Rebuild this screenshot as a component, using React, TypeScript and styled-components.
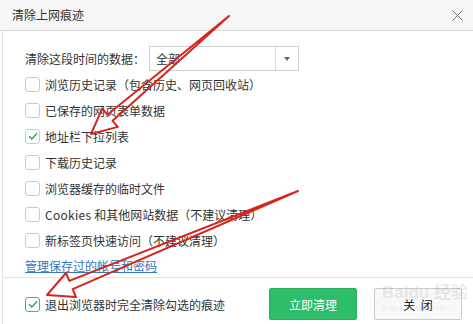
import React from "react";
import styled, { createGlobalStyle } from "styled-components";

const Global = createGlobalStyle`
  html, body { margin: 0; padding: 0; background: #fff; }
  body {
    font-family: "Noto Sans CJK SC", "Noto Sans", sans-serif;
    font-size: 12px;
    color: #333;
  }
  * { box-sizing: border-box; }
`;

const Dialog = styled.div`
  position: relative;
  width: 473px;
  height: 324px;
  overflow: hidden;
  display: flex;
  flex-direction: column;
  background: #fff;
`;

const Header = styled.div`
  height: 31px;
  flex: none;
  display: flex;
  align-items: center;
  justify-content: space-between;
  padding: 0 8px 0 12px;
  background: #f6f6f6;
  border-bottom: 1px solid #dadada;
`;

const Title = styled.div`
  font-size: 12px;
  color: #333;
  line-height: 30px;
`;

const CloseBtn = styled.div`
  width: 11px;
  height: 11px;
  display: flex;
  margin-right: 2px;
`;

const Main = styled.div`
  flex: 1;
  display: flex;
  flex-direction: column;
  margin-left: 2px;
  border-left: 1px solid #e3e3e3;
`;

const Body = styled.div`
  padding: 15px 0 0 22px;
  display: flex;
  flex-direction: column;
`;

const SelectRow = styled.div`
  height: 25px;
  display: flex;
  align-items: center;
`;

const SelectLabel = styled.div`
  width: 124px;
`;

const Select = styled.div`
  width: 150px;
  height: 25px;
  border: 1px solid #cfcfcf;
  display: flex;
  align-items: stretch;
`;

const SelectValue = styled.div`
  flex: 1;
  display: flex;
  align-items: center;
  padding-left: 6px;
`;

const SelectArrow = styled.div`
  width: 23px;
  border-left: 1px solid #dcdcdc;
  display: flex;
  align-items: center;
  justify-content: center;
  &::after {
    content: "";
    border-left: 3.5px solid transparent;
    border-right: 3.5px solid transparent;
    border-top: 4px solid #666;
  }
`;

const Row = styled.label<{ $h?: number }>`
  height: ${(p) => p.$h ?? 26}px;
  display: flex;
  align-items: center;
  white-space: nowrap;
`;

const Box = styled.span<{ $checked?: boolean; $accent?: boolean }>`
  width: 15px;
  height: 15px;
  flex: none;
  margin-right: 5px;
  border: 1px solid ${(p) => (p.$accent ? "#49b57a" : "#cbcbcb")};
  border-radius: 3px;
  background: #fff;
  display: flex;
  align-items: center;
  justify-content: center;
`;

const Latin = styled.span`
  letter-spacing: 0.3px;
`;

const Link = styled.a`
  color: #3675c0;
  text-decoration: underline;
  cursor: pointer;
`;

const Divider = styled.div`
  height: 1px;
  background: #e3e3e3;
`;

const Footer = styled.div`
  flex: 1;
  display: flex;
  align-items: center;
  padding: 6px 11px 0 22px;
`;

const Spacer = styled.div`
  flex: 1;
`;

const Buttons = styled.div`
  display: flex;
  gap: 17px;
`;

const Button = styled.button<{ $primary?: boolean }>`
  width: 88px;
  height: 32px;
  border-radius: 2px;
  font-family: inherit;
  font-size: 12px;
  word-spacing: 3px;
  border: 1px solid ${(p) => (p.$primary ? "#2aae62" : "#cacaca")};
  background: ${(p) => (p.$primary ? "#2dbd6b" : "#f8f8f8")};
  color: ${(p) => (p.$primary ? "#fff" : "#222")};
  padding: 0;
`;

const Overlay = styled.svg`
  position: absolute;
  left: 0;
  top: 0;
  pointer-events: none;
`;

const Watermark = styled.div`
  position: absolute;
  left: 382px;
  top: 284px;
  color: rgba(130, 130, 130, 0.16);
  font-family: "Liberation Sans", "Noto Sans CJK SC", sans-serif;
  line-height: 1;
  white-space: nowrap;
  pointer-events: none;
`;

const WmBig = styled.div`
  font-size: 17px;
  font-weight: bold;
`;

const WmSmall = styled.div`
  font-size: 8px;
  margin-top: 3px;
`;

const Check = () => (
  <svg width="10" height="8" viewBox="0 0 10 8">
    <path d="M1 4.2 L3.8 7 L9 1.2" fill="none" stroke="#35b06a" strokeWidth="1.6" />
  </svg>
);

type Item = { text: React.ReactNode; checked?: boolean };

const items: Item[] = [
  { text: "浏览历史记录（包含历史、网页回收站）" },
  { text: "已保存的网页表单数据" },
  { text: "地址栏下拉列表", checked: true },
  { text: "下载历史记录" },
  { text: "浏览器缓存的临时文件" },
  {
    text: (
      <>
        <Latin>Cookies</Latin> 和其他网站数据（不建议清理）
      </>
    ),
  },
  { text: "新标签页快速访问（不建议清理）" },
];

function arrowPoints(
  tx: number,
  ty: number,
  hx: number,
  hy: number,
  headLen: number,
  shaftW: number,
  headW: number
) {
  const dx = hx - tx;
  const dy = hy - ty;
  const len = Math.hypot(dx, dy);
  const ux = dx / len;
  const uy = dy / len;
  const nx = -uy;
  const ny = ux;
  const bx = hx - ux * headLen;
  const by = hy - uy * headLen;
  const pts = [
    [tx, ty],
    [bx + nx * shaftW, by + ny * shaftW],
    [bx + nx * headW, by + ny * headW],
    [hx, hy],
    [bx - nx * headW, by - ny * headW],
    [bx - nx * shaftW, by - ny * shaftW],
  ];
  return pts.map((p) => `${p[0].toFixed(1)},${p[1].toFixed(1)}`).join(" ");
}

export default function App() {
  return (
    <>
      <Global />
      <Dialog>
        <Header>
          <Title>清除上网痕迹</Title>
          <CloseBtn>
            <svg width="11" height="11" viewBox="0 0 11 11">
              <path d="M0.5 0.5 L10.5 10.5 M10.5 0.5 L0.5 10.5" stroke="#777" strokeWidth="1" />
            </svg>
          </CloseBtn>
        </Header>
        <Main>
          <Body>
            <SelectRow>
              <SelectLabel>清除这段时间的数据：</SelectLabel>
              <Select>
                <SelectValue>全部</SelectValue>
                <SelectArrow />
              </Select>
            </SelectRow>
            {items.map((it, i) => (
              <Row key={i}>
                <Box $checked={it.checked}>{it.checked && <Check />}</Box>
                <span>{it.text}</span>
              </Row>
            ))}
            <Row $h={24}>
              <Link>管理保存过的帐号和密码</Link>
            </Row>
          </Body>
          <Divider />
          <Footer>
            <Row $h={30}>
              <Box $checked $accent>
                <Check />
              </Box>
              <span>退出浏览器时完全清除勾选的痕迹</span>
            </Row>
            <Spacer />
            <Buttons>
              <Button $primary>立即清理</Button>
              <Button>关 闭</Button>
            </Buttons>
          </Footer>
        </Main>
        <Watermark>
          <WmBig>Baidu 经验</WmBig>
          <WmSmall>jingyan.baidu.com</WmSmall>
        </Watermark>
        <Overlay width="473" height="324" viewBox="0 0 473 324">
          <polygon
            points={arrowPoints(229, 16, 91, 134, 25, 4, 12)}
            fill="none"
            stroke="#d3261e"
            strokeWidth="2"
            strokeLinejoin="round"
          />
          <polygon
            points={arrowPoints(298, 191, 47, 295, 26, 4.5, 13)}
            fill="none"
            stroke="#d3261e"
            strokeWidth="2"
            strokeLinejoin="round"
          />
        </Overlay>
      </Dialog>
    </>
  );
}
